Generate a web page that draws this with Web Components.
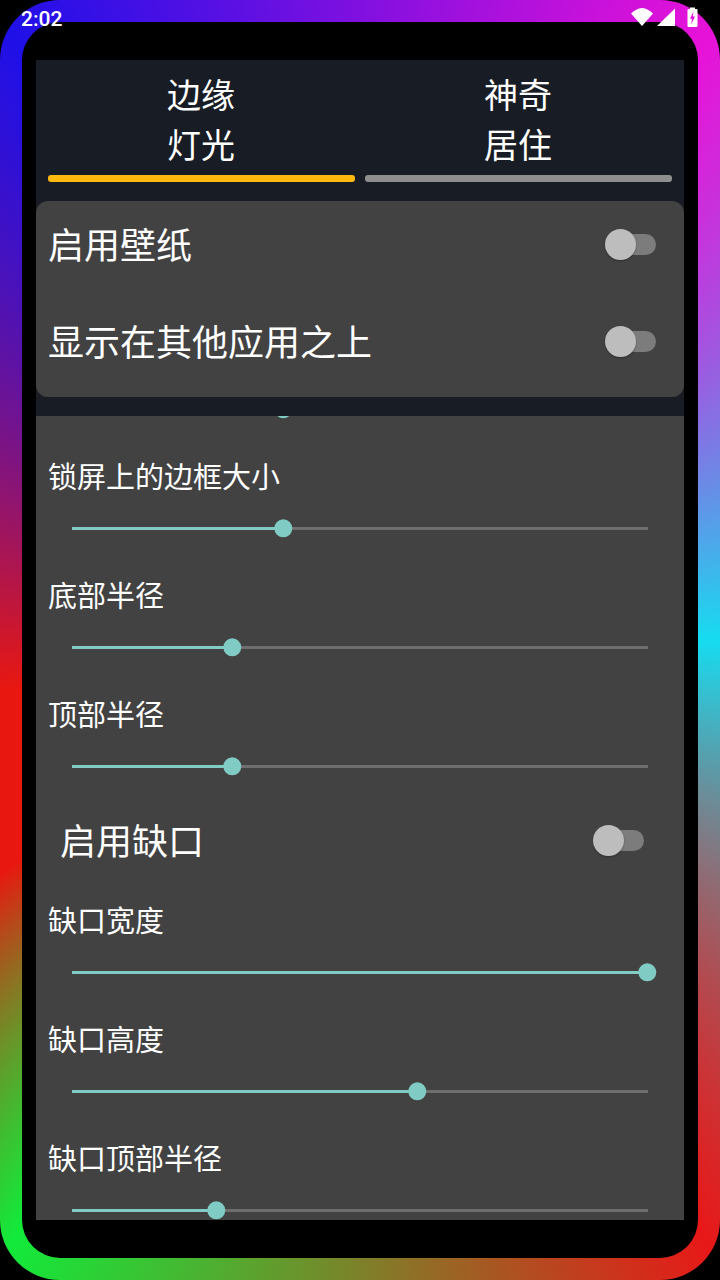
<!DOCTYPE html>
<html lang="zh">
<head>
<meta charset="utf-8">
<title>边缘灯光</title>
<style>
  html, body { margin: 0; background: #000; }
  body { font-family: "Noto Sans CJK SC", "Noto Sans", sans-serif; color: #fff; }
</style>
</head>
<body>
<edge-frame>
  <status-bar slot="status" time="2:02"></status-bar>
  <tab-strip>
    <tab-item active>边缘<br>灯光</tab-item>
    <tab-item>神奇<br>居住</tab-item>
  </tab-strip>
  <settings-card>
    <toggle-row>启用壁纸</toggle-row>
    <toggle-row>显示在其他应用之上</toggle-row>
  </settings-card>
  <settings-list slot="list">
    <slider-row value="211"></slider-row>
    <slider-row value="211">锁屏上的边框大小</slider-row>
    <slider-row value="160">底部半径</slider-row>
    <slider-row value="160">顶部半径</slider-row>
    <toggle-row inset>启用缺口</toggle-row>
    <slider-row value="575">缺口宽度</slider-row>
    <slider-row value="345">缺口高度</slider-row>
    <slider-row value="144">缺口顶部半径</slider-row>
  </settings-list>
</edge-frame>

<script>
const edgeFrameTemplate = document.createElement('template');
edgeFrameTemplate.innerHTML = `
  <style>
    :host {
      display: block;
      position: relative;
      box-sizing: border-box;
      width: 720px;
      height: 1280px;
      padding: 22px;
      border-radius: 60px;
      background: conic-gradient(at 360px 640px,
        #8010e0 0deg,
        #e812d8 30deg,
        #16dcf0 90deg,
        #e81818 150deg,
        #12ea3a 210deg,
        #e81810 237deg,
        #e81810 262deg,
        #1f10e8 330deg,
        #8010e0 360deg);
    }
    .screen {
      box-sizing: border-box;
      height: 100%;
      padding: 38px 14px;
      background: #000;
      border-radius: 38px;
    }
    .panel {
      display: flex;
      flex-direction: column;
      height: 100%;
    }
    .head {
      background: #181c24;
      padding-top: 10px;
      padding-bottom: 19px;
    }
  </style>
  <slot name="status"></slot>
  <div class="screen">
    <div class="panel">
      <div class="head"><slot></slot></div>
      <slot name="list"></slot>
    </div>
  </div>
`;

class EdgeFrame extends HTMLElement {
  constructor() {
    super();
    this.attachShadow({ mode: 'open' });
    this.shadowRoot.appendChild(edgeFrameTemplate.content.cloneNode(true));
  }
}

const statusBarTemplate = document.createElement('template');
statusBarTemplate.innerHTML = `
  <style>
    :host {
      display: block;
      position: absolute;
      top: 0;
      left: 0;
      right: 0;
      height: 36px;
    }
    #time {
      position: absolute;
      left: 21px;
      top: 7px;
      font: 500 21px/24px Roboto, sans-serif;
      color: #fff;
    }
    svg { position: absolute; left: 0; top: 0; }
  </style>
  <span id="time"></span>
  <svg width="720" height="36" viewBox="0 0 720 36" fill="#fff">
    <path d="M642 26 L631 13.5 C634 10.5 638 8 642 8 C646 8 650 10.5 653 13.5 Z"/>
    <path d="M675 8.5 V26 H657 Z"/>
    <path fill-rule="evenodd" d="M690 9 V7.5 H695 V9 H696.5 Q697.5 9 697.5 10 V26 Q697.5 27 696.5 27 H688.5 Q687.5 27 687.5 26 V10 Q687.5 9 688.5 9 Z M693.5 11.5 L690 18.8 H692 L691.2 24.5 L695 16.5 H692.8 Z"/>
  </svg>
`;

class StatusBar extends HTMLElement {
  constructor() {
    super();
    this.attachShadow({ mode: 'open' });
    this.shadowRoot.appendChild(statusBarTemplate.content.cloneNode(true));
  }

  connectedCallback() {
    this.shadowRoot.querySelector('#time').textContent = this.getAttribute('time');
  }
}

const tabStripTemplate = document.createElement('template');
tabStripTemplate.innerHTML = `
  <style>
    :host {
      display: grid;
      grid-template-columns: 1fr 1fr;
      gap: 10px;
      padding: 0 12px;
      margin-bottom: 19px;
    }
  </style>
  <slot></slot>
`;

class TabStrip extends HTMLElement {
  constructor() {
    super();
    this.attachShadow({ mode: 'open' });
    this.shadowRoot.appendChild(tabStripTemplate.content.cloneNode(true));
  }
}

const tabItemTemplate = document.createElement('template');
tabItemTemplate.innerHTML = `
  <style>
    :host {
      display: block;
      text-align: center;
      font-size: 34px;
      line-height: 50px;
      color: #fff;
    }
    .text { margin-top: -1px; margin-left: -1px; }
    .bar {
      height: 7px;
      margin-top: 6px;
      border-radius: 3px;
      background: #8e8e8e;
    }
    :host([active]) .bar { background: #ffb90f; }
  </style>
  <div class="text"><slot></slot></div>
  <div class="bar"></div>
`;

class TabItem extends HTMLElement {
  constructor() {
    super();
    this.attachShadow({ mode: 'open' });
    this.shadowRoot.appendChild(tabItemTemplate.content.cloneNode(true));
  }
}

const settingsCardTemplate = document.createElement('template');
settingsCardTemplate.innerHTML = `
  <style>
    :host {
      display: flex;
      flex-direction: column;
      gap: 45px;
      height: 196px;
      box-sizing: border-box;
      padding: 17px 0 0;
      background: #424242;
      border-radius: 12px;
    }
  </style>
  <slot></slot>
`;

class SettingsCard extends HTMLElement {
  constructor() {
    super();
    this.attachShadow({ mode: 'open' });
    this.shadowRoot.appendChild(settingsCardTemplate.content.cloneNode(true));
  }
}

const toggleRowTemplate = document.createElement('template');
toggleRowTemplate.innerHTML = `
  <style>
    :host {
      display: flex;
      align-items: center;
      justify-content: space-between;
      height: 52px;
      padding: 0 28px 0 12px;
      font-size: 36px;
      color: #fff;
      margin: 0;
    }
    :host([inset]) {
      padding: 0 40px 0 24px;
      margin-bottom: 35px;
    }
    .label { margin-top: -2px; }
    .switch {
      display: block;
      position: relative;
      width: 51px;
      height: 21px;
    }
    .track {
      position: absolute;
      left: 6px;
      right: 0;
      top: 0;
      bottom: 0;
      border-radius: 11px;
      background: #7c7c7c;
    }
    .thumb {
      position: absolute;
      left: 0;
      top: -5px;
      width: 31px;
      height: 31px;
      border-radius: 50%;
      background: #bdbdbd;
      box-shadow: 0 1px 2px rgba(0,0,0,0.3);
    }
  </style>
  <span class="label"><slot></slot></span>
  <span class="switch"><span class="track"></span><span class="thumb"></span></span>
`;

class ToggleRow extends HTMLElement {
  constructor() {
    super();
    this.attachShadow({ mode: 'open' });
    this.shadowRoot.appendChild(toggleRowTemplate.content.cloneNode(true));
  }
}

const settingsListTemplate = document.createElement('template');
settingsListTemplate.innerHTML = `
  <style>
    :host {
      display: block;
      flex: 1;
      min-height: 0;
      overflow: hidden;
      background: #424242;
    }
    .scroll { margin-top: -38px; }
  </style>
  <div class="scroll"><slot></slot></div>
`;

class SettingsList extends HTMLElement {
  constructor() {
    super();
    this.attachShadow({ mode: 'open' });
    this.shadowRoot.appendChild(settingsListTemplate.content.cloneNode(true));
  }
}

const sliderRowTemplate = document.createElement('template');
sliderRowTemplate.innerHTML = `
  <style>
    :host {
      display: block;
      padding-bottom: 17px;
      color: #fff;
    }
    .label {
      height: 36px;
      padding: 0 0 4px 12px;
      font-size: 29px;
      line-height: 36px;
    }
    .label.empty { display: none; }
    .slider {
      display: flex;
      align-items: center;
      box-sizing: border-box;
      height: 62px;
      padding: 1px 36px 0;
    }
    .rail {
      position: relative;
      flex: 1;
      height: 3px;
      background: #6e6e6e;
    }
    .fill {
      height: 100%;
      background: #80cbc4;
    }
    .thumb {
      position: absolute;
      top: -8px;
      width: 18px;
      height: 18px;
      transform: translate(-8.7px, 0.3px);
      border-radius: 50%;
      background: #80cbc4;
    }
  </style>
  <div class="label"><slot></slot></div>
  <div class="slider">
    <div class="rail"><div class="fill"></div><div class="thumb"></div></div>
  </div>
`;

class SliderRow extends HTMLElement {
  constructor() {
    super();
    this.attachShadow({ mode: 'open' });
    this.shadowRoot.appendChild(sliderRowTemplate.content.cloneNode(true));
  }

  connectedCallback() {
    const value = this.getAttribute('value');
    this.shadowRoot.querySelector('.fill').style.width = `${value}px`;
    this.shadowRoot.querySelector('.thumb').style.left = `${value}px`;
    if (!this.textContent.trim()) {
      this.shadowRoot.querySelector('.label').classList.add('empty');
    }
  }
}

customElements.define('edge-frame', EdgeFrame);
customElements.define('status-bar', StatusBar);
customElements.define('tab-strip', TabStrip);
customElements.define('tab-item', TabItem);
customElements.define('settings-card', SettingsCard);
customElements.define('toggle-row', ToggleRow);
customElements.define('settings-list', SettingsList);
customElements.define('slider-row', SliderRow);
</script>
</body>
</html>
